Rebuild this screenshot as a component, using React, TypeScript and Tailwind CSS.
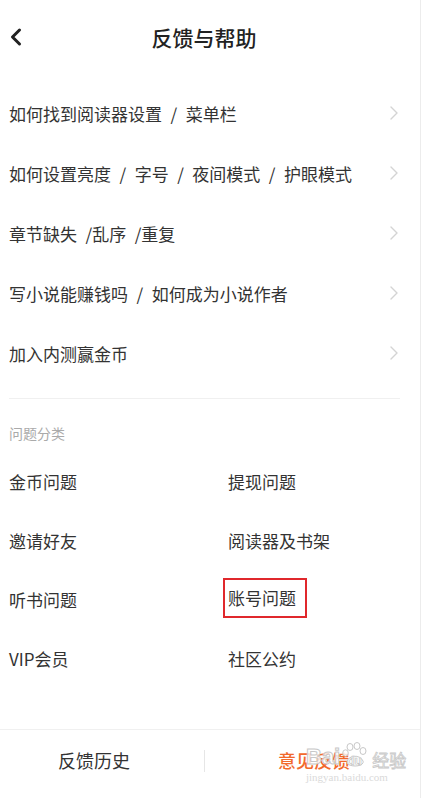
import { ChevronLeft, ChevronRight } from 'lucide-react'

const faqs = [
    '如何找到阅读器设置\u2002/\u2002菜单栏',
    '如何设置亮度\u2002/\u2002字号\u2002/\u2002夜间模式\u2002/\u2002护眼模式',
    '章节缺失\u2002/乱序\u2002/重复',
    '写小说能赚钱吗\u2002/\u2002如何成为小说作者',
    '加入内测赢金币',
]

const categories = [
    '金币问题',
    '提现问题',
    '邀请好友',
    '阅读器及书架',
    '听书问题',
    '账号问题',
    'VIP会员',
    '社区公约',
]

export default function App() {
    return (
        <div className="w-[425px] h-[798px] bg-white flex overflow-hidden font-['Noto_Sans_CJK_SC','Noto_Sans',sans-serif] text-[#333]">
            <div className="w-[421px] h-full flex flex-col border-r border-[#ececec]">
                {/* Header */}
                <div className="relative h-[78px] flex items-center justify-center shrink-0">
                    <ChevronLeft size={28} strokeWidth={2.6} className="absolute left-[2px] top-[23px] text-[#222]" />
                    <h1 className="text-[21px] font-medium text-[#222] ml-[-12px] mt-[-2px]">反馈与帮助</h1>
                </div>

                {/* FAQ list */}
                <div className="pt-[5px] px-[9px]">
                    {faqs.map((q) => (
                        <div key={q} className="h-[60px] flex items-center justify-between">
                            <span className="text-[17px] leading-none">{q}</span>
                            <ChevronRight size={24} strokeWidth={1.4} className="text-[#d4d4d4] mr-[5px]" />
                        </div>
                    ))}
                    <div className="mt-[15px] h-px bg-[#f0f0f0] mr-[11px]" />
                </div>

                {/* Categories */}
                <div className="px-[9px] pt-[24px]">
                    <div className="text-[14px] leading-[20px] text-[#aaa]">问题分类</div>
                    <div className="grid grid-cols-[219px_1fr] mt-[9px]">
                        {categories.map((c) => (
                            <div key={c} className="h-[59px] flex items-center">
                                {c === '账号问题' ? (
                                    <span className="text-[17px] leading-none border-2 border-[#e0282c] ml-[-5px] pl-[3px] pr-[9px] pt-[9px] pb-[10px] mt-[-3px]">
                                        {c}
                                    </span>
                                ) : (
                                    <span className="text-[17px] leading-none">{c}</span>
                                )}
                            </div>
                        ))}
                    </div>
                </div>

                {/* Bottom bar */}
                <div className="mt-auto mb-[7px] border-t border-[#f0f0f0] h-[62px] flex items-center relative">
                    <div className="w-[204px] flex justify-center">
                        <span className="text-[18px] text-[#333] mr-[16px]">反馈历史</span>
                    </div>
                    <div className="w-px h-[22px] bg-[#e6e6e6]" />
                    <div className="flex-1 flex justify-start pl-[73px]">
                        <span className="text-[18px] text-[#f2692c] font-medium">意见反馈</span>
                    </div>

                    {/* Watermark */}
                    <div className="absolute left-[306px] top-[12px] flex flex-col items-start pointer-events-none">
                        <div className="flex items-end gap-[2px]">
                            <span className="text-[22px] leading-none font-bold font-['Liberation_Sans',sans-serif] text-white/80 [-webkit-text-stroke:1px_#c8c8c8]">Bai</span>
                            <div className="relative w-[26px] h-[26px]">
                                <svg viewBox="0 0 26 26" className="absolute inset-0" fill="rgba(255,255,255,0.8)" stroke="#c8c8c8" strokeWidth="1">
                                    <ellipse cx="8" cy="5" rx="3" ry="3.5" />
                                    <ellipse cx="15" cy="4" rx="3" ry="3.5" />
                                    <ellipse cx="21" cy="9" rx="3" ry="3.5" />
                                    <ellipse cx="3.5" cy="11" rx="2.8" ry="3.2" />
                                    <path d="M5 20 C6 13 18 12 21 19 C23 25 6 26 5 20 Z" />
                                </svg>
                                <span className="absolute left-[5px] bottom-[1px] text-[12px] leading-none font-bold font-['Liberation_Sans',sans-serif] text-white [-webkit-text-stroke:0.6px_#bbb]">du</span>
                            </div>
                            <span className="text-[17px] leading-none text-white/80 [-webkit-text-stroke:0.8px_#c8c8c8] ml-[2px]">经验</span>
                        </div>
                        <span className="text-[11px] leading-none mt-[4px] font-['Liberation_Serif',serif] text-[#dadada]">jingyan.baidu.com</span>
                    </div>
                </div>
            </div>
        </div>
    )
}
